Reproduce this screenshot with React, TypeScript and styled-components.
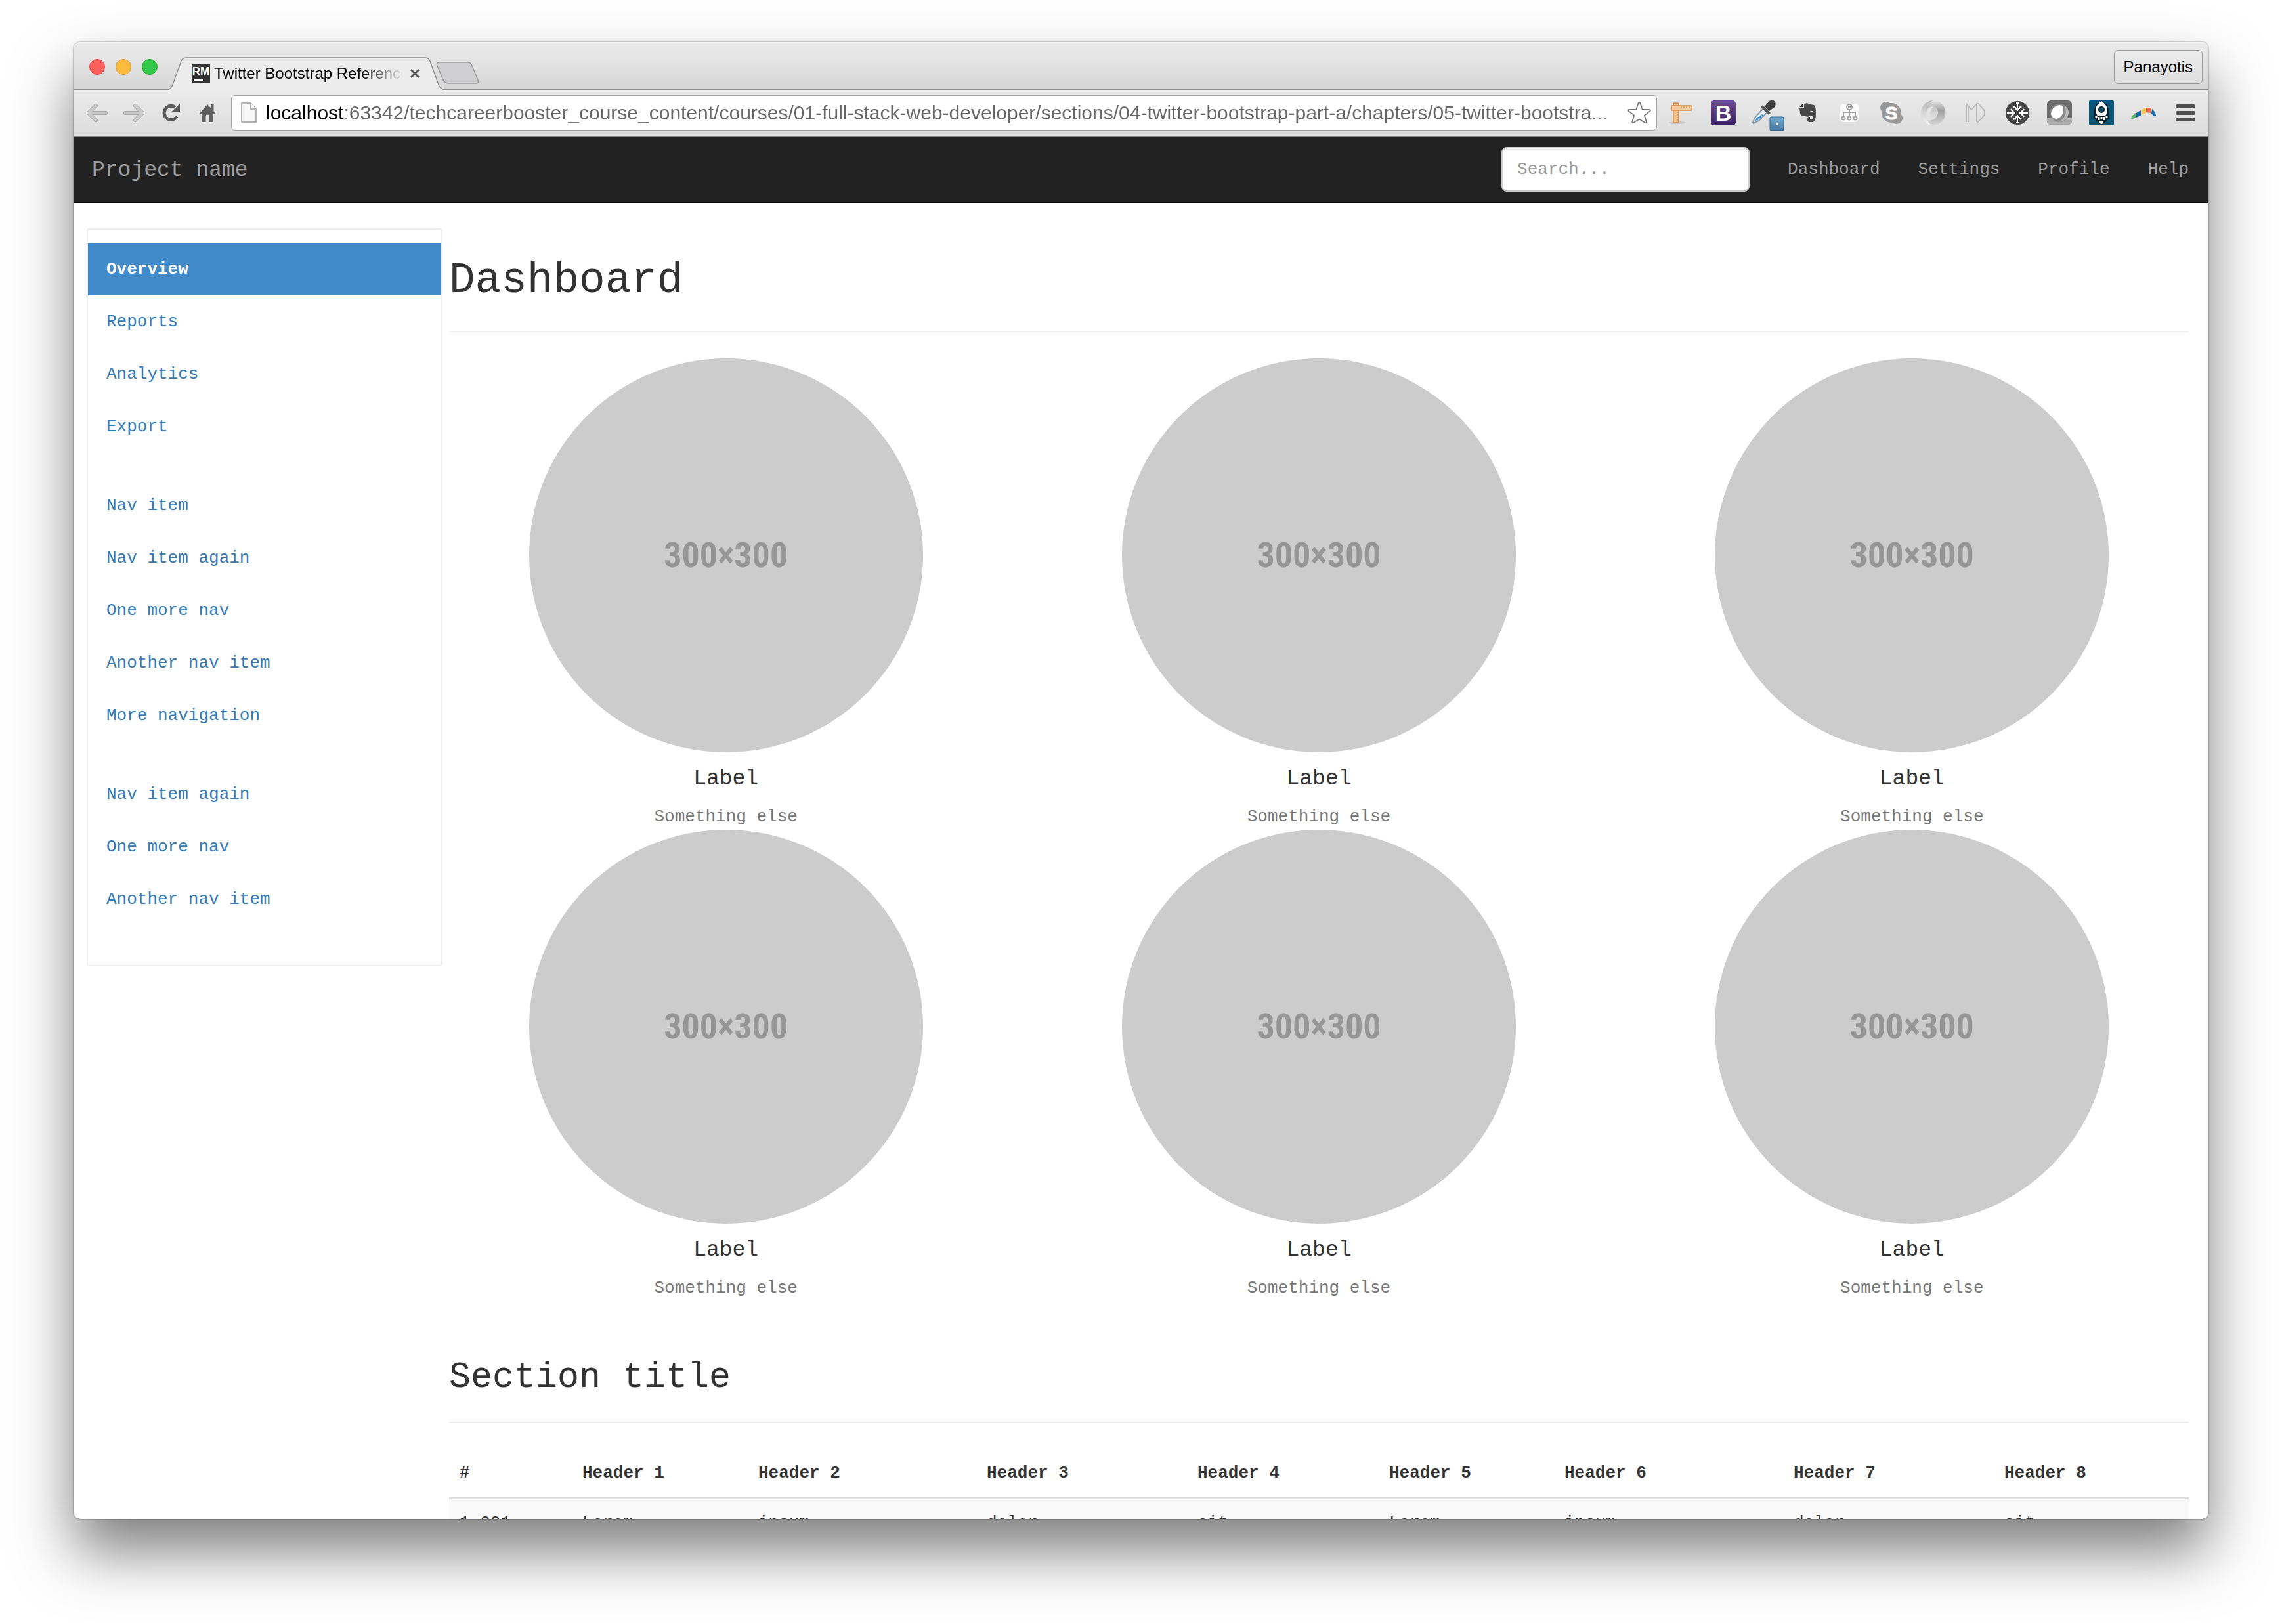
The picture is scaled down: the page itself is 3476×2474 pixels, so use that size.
import React from "react";
import styled, { createGlobalStyle } from "styled-components";

const mono = `"Liberation Mono", "DejaVu Sans Mono", monospace`;
const sans = `"Liberation Sans", Arial, sans-serif`;

const GlobalStyle = createGlobalStyle`
  *, *::before, *::after { box-sizing: border-box; }
  html, body { margin: 0; background: #fff; }
  a { text-decoration: none; }
`;

/* ---------- Browser window ---------- */

const Desktop = styled.div`
  display: flex;
  height: 100vh;
  padding: 64px 112px 160px;
  overflow: hidden;
`;

const BrowserWindow = styled.div`
  display: flex;
  flex: 1;
  flex-direction: column;
  min-width: 0;
  overflow: hidden;
  border-radius: 10px;
  background: #fff;
  box-shadow: 0 0 2px rgba(0, 0, 0, 0.65), 0 50px 90px rgba(0, 0, 0, 0.5);
`;

const TabStrip = styled.header`
  display: flex;
  flex: none;
  align-items: flex-end;
  height: 73px;
  padding: 0 9px 0 24px;
  border-bottom: 1px solid #8f8f8f;
  background: linear-gradient(#ececec, #d6d6d6);
  box-shadow: inset 0 2px 0 #f6f6f6;
`;

const Lights = styled.div`
  display: flex;
  gap: 16px;
  align-self: center;
  margin: 4px 16px 0 0;
`;

const Light = styled.button<{ $fill: string; $edge: string }>`
  width: 24px;
  height: 24px;
  padding: 0;
  border: 1px solid ${(p) => p.$edge};
  border-radius: 50%;
  background: ${(p) => p.$fill};
`;

const Tab = styled.div`
  position: relative;
  display: flex;
  align-items: center;
  width: 420px;
  height: 50px;
  margin-bottom: -1px;
  padding: 0 34px 0 36px;
`;

const TabShape = styled.svg`
  position: absolute;
  inset: 0;
  width: 100%;
  height: 100%;
`;

const Favicon = styled.svg`
  position: relative;
  flex: none;
  width: 28px;
  height: 28px;
`;

const TabTitle = styled.span`
  position: relative;
  flex: 1;
  margin: 0 8px 0 6px;
  overflow: hidden;
  color: #000;
  font: 24px/32px ${sans};
  white-space: nowrap;
  mask-image: linear-gradient(to right, #000 78%, transparent);
`;

const TabClose = styled.button`
  position: relative;
  display: flex;
  width: 20px;
  height: 20px;
  padding: 2px;
  border: 0;
  background: none;
`;

const NewTab = styled.button`
  display: flex;
  width: 66px;
  height: 34px;
  margin: 0 auto 8px -12px;
  padding: 0;
  border: 0;
  background: none;
`;

const Profile = styled.button`
  align-self: flex-start;
  height: 52px;
  margin-top: 12px;
  padding: 0 14px;
  border: 1px solid #999;
  border-radius: 6px;
  background: linear-gradient(#ececec, #dedede);
  color: #000;
  font: 24px/48px ${sans};
`;

const Toolbar = styled.div`
  display: flex;
  flex: none;
  align-items: center;
  height: 71px;
  padding: 0 3px 0 8px;
  border-bottom: 1px solid #8a8a8a;
  background: linear-gradient(#ebebeb, #dcdcdc);
`;

const NavButton = styled.button`
  display: flex;
  flex: none;
  align-items: center;
  justify-content: center;
  width: 56px;
  height: 54px;
  padding: 0;
  border: 0;
  background: none;
`;

const ExtensionButton = styled(NavButton)`
  width: 64px;
`;

const AddressBar = styled.form`
  display: flex;
  flex: 1;
  align-items: center;
  height: 54px;
  min-width: 0;
  margin: 0 5px 0 8px;
  padding: 0 8px 0 14px;
  border: 1px solid #a0a0a0;
  border-radius: 6px;
  background: #fff;
`;

const AddressInput = styled.input`
  flex: 1;
  min-width: 0;
  height: 40px;
  margin: 0 8px 0 14px;
  padding: 0;
  border: 0;
  outline: 0;
  background: linear-gradient(to right, #000 120px, #666 120px);
  background-clip: text;
  -webkit-text-fill-color: transparent;
  font: 30px/40px ${sans};
`;

const StarButton = styled.button`
  display: flex;
  padding: 0;
  border: 0;
  background: none;
`;

/* ---------- Web page ---------- */

const Navbar = styled.nav`
  display: flex;
  flex: none;
  align-items: center;
  height: 102px;
  padding: 0 30px 0 28px;
  gap: 58px;
  border-bottom: 2px solid #080808;
  background: #222;
  font: 26px/40px ${mono};
`;

const Brand = styled.a`
  margin-right: auto;
  padding-top: 4px;
  color: #9d9d9d;
  font-size: 33px;
`;

const NavLink = styled.a`
  color: #9d9d9d;
`;

const SearchInput = styled.input`
  width: 378px;
  height: 68px;
  padding: 0 22px;
  border: 2px solid #ccc;
  border-radius: 8px;
  background: #fff;
  box-shadow: inset 0 2px 2px rgba(0, 0, 0, 0.075);
  color: #555;
  font: 26px/40px ${mono};
  &::placeholder {
    color: #999;
    opacity: 1;
  }
`;

const Page = styled.div`
  display: flex;
  flex: 1;
  align-items: flex-start;
  gap: 10px;
  min-height: 0;
  padding: 0 30px 0 20px;
  color: #333;
  font: 26px/40px ${mono};
`;

const Sidebar = styled.aside`
  flex: 0 0 542px;
  margin-top: 38px;
  padding: 20px 0;
  border: 2px solid #eee;
  border-radius: 4px;
`;

const NavGroup = styled.ul`
  margin: 0 0 40px;
  padding: 0;
  list-style: none;
`;

const SideLink = styled.a<{ $active: boolean }>`
  display: block;
  padding: 20px 28px;
  background: ${(p) => (p.$active ? "#428bca" : "transparent")};
  color: ${(p) => (p.$active ? "#fff" : "#337ab7")};
  font-weight: ${(p) => (p.$active ? 700 : 400)};
`;

const Main = styled.main`
  flex: 1;
  min-width: 0;
  padding-top: 78px;
`;

const PageTitle = styled.h1`
  margin: 0 0 40px;
  padding-bottom: 36px;
  border-bottom: 2px solid #eee;
  font-size: 66px;
  font-weight: 400;
  line-height: 80px;
`;

const SectionTitle = styled.h2`
  margin: 84px 0 40px;
  padding-bottom: 34px;
  border-bottom: 2px solid #eee;
  font-size: 55px;
  font-weight: 400;
  line-height: 66px;
`;

const Placeholders = styled.section`
  display: grid;
  grid-template-columns: repeat(3, 1fr);
  margin: 0 -30px;
`;

const Placeholder = styled.div`
  display: flex;
  flex-direction: column;
  align-items: center;
`;

const Circle = styled.div`
  display: flex;
  align-items: center;
  justify-content: center;
  width: 600px;
  height: 600px;
  border-radius: 50%;
  background: #ccc;
  color: #969696;
  font: 700 54px/64px "Liberation Sans Narrow", "Roboto Condensed", "Open Sans Condensed", ${sans};
`;

const Label = styled.h4`
  margin: 22px 0 18px;
  font-size: 33px;
  font-weight: 400;
  line-height: 38px;
`;

const Caption = styled.span`
  color: #777;
`;

const Table = styled.table`
  width: 100%;
  table-layout: fixed;
  border-collapse: separate;
  border-spacing: 0;
`;

const HeadCell = styled.th`
  padding: 16px;
  border-bottom: 4px solid #ddd;
  font-weight: 700;
  text-align: left;
`;

const Cell = styled.td`
  padding: 16px;
  background: #f9f9f9;
`;

/* ---------- Icons ---------- */

const Arrow = ({ flip }: { flip?: boolean }) => (
  <svg width="32" height="28" viewBox="0 0 32 28" aria-hidden="true">
    <g transform={flip ? "matrix(-1 0 0 1 32 0)" : undefined}>
      <path d="M3 14H29M14 3L3 14L14 25" fill="none" stroke="#aaa" strokeWidth="6" strokeLinecap="round" strokeLinejoin="round" />
      <path d="M3 14H29M14 3L3 14L14 25" fill="none" stroke="#cbcbcb" strokeWidth="4" strokeLinecap="round" strokeLinejoin="round" />
    </g>
  </svg>
);

const Reload = () => (
  <svg width="30" height="30" viewBox="0 0 30 30" aria-hidden="true">
    <path d="M24.500 20.500A10.500 10.500 0 1 1 22 6.500" fill="none" stroke="#5a5a5a" strokeWidth="5" />
    <path d="M29 1V13H16.500Z" fill="#5a5a5a" />
  </svg>
);

const Home = () => (
  <svg width="28" height="30" viewBox="0 0 28 30" aria-hidden="true">
    <path d="M14 2L1 17H5V29H11.500V20A2.500 2.500 0 0 1 16.500 20V29H23V17H27L23.500 12.500V2H20V8.500Z" fill="#5e5e5e" />
  </svg>
);

const PageIcon = () => (
  <svg width="24" height="32" viewBox="0 0 24 32" aria-hidden="true">
    <path d="M1 1H15L23 10V30H1Z" fill="#f7f7f8" stroke="#999" strokeWidth="1.500" />
    <path d="M15 1V10H23" fill="#fff" stroke="#999" strokeWidth="1.500" />
  </svg>
);

const Star = () => (
  <svg width="36" height="36" viewBox="0 0 36 36" aria-hidden="true">
    <path d="M18 2Q19 2 19.600 3.600L22.800 12.700L33 13Q36 13.600 33.800 15.600L25.800 21.600L28.800 31.500Q29.200 34.200 26.700 33L18 27.400L9.300 33Q6.800 34.200 7.200 31.500L10.200 21.600L2.200 15.600Q0 13.600 3 13L13.200 12.700L16.400 3.600Q17 2 18 2Z" fill="#fff" stroke="#757575" strokeWidth="1.800" strokeLinejoin="round" />
  </svg>
);

const Icon = ({ children }: { children: React.ReactNode }) => (
  <svg width="40" height="54" viewBox="0 0 40 54" aria-hidden="true">
    {children}
  </svg>
);

const Ruler = () => (
  <Icon>
    <ellipse cx="14" cy="42" rx="13" ry="2" fill="#c8c8c8" />
    <rect x="8" y="12" width="8" height="30" rx="1" fill="#f2c48e" stroke="#d2874a" strokeWidth="1.500" />
    <rect x="5" y="16" width="31" height="7" rx="1" fill="#f5cda0" stroke="#d2874a" strokeWidth="1.500" />
    <path d="M13 26H16M13 30H16M13 34H16M13 38H16M20 17V20M24 17V20M28 17V20M32 17V20" stroke="#c07a40" strokeWidth="1.200" />
  </Icon>
);

const BootstrapIcon = () => (
  <Icon>
    <defs>
      <linearGradient id="purple" x2="0" y2="1">
        <stop stopColor="#6c4d92" />
        <stop offset="1" stopColor="#3b2360" />
      </linearGradient>
    </defs>
    <rect x="1" y="8" width="38" height="38" rx="5" fill="url(#purple)" />
    <text x="20" y="39" textAnchor="middle" fontFamily="Liberation Sans" fontWeight="700" fontSize="34" fill="#fff">B</text>
  </Icon>
);

const Dropper = () => (
  <svg width="58" height="56" viewBox="0 0 58 56" aria-hidden="true">
    <defs>
      <linearGradient id="badge" x2="0" y2="1">
        <stop stopColor="#7fb2d8" />
        <stop offset="1" stopColor="#3f739c" />
      </linearGradient>
    </defs>
    <path d="M10 43L13 35L26 21L32 27L19 40L11 44Z" fill="#e8f1fa" stroke="#8c959d" strokeWidth="2" />
    <path d="M14 40L15 36L24 30L26 31L18 39Z" fill="#3d93dc" />
    <path d="M25 16L37 28L34 31L22 19Z" fill="#555" />
    <path d="M28 18L35 10Q40 7 44 11Q46 16 42 20L35 25Z" fill="#3f3f3f" />
    <rect x="36" y="34" width="21" height="21" rx="2" fill="url(#badge)" stroke="#2f668f" />
    <rect x="45" y="43" width="3" height="4" fill="#fff" />
  </svg>
);

const Elephant = () => (
  <Icon>
    <path d="M8 19H15V13Q21 11 24 14L30 15Q33 16 33 28Q33 41 28 41H24Q19 41 19 36Q19 33 24 33V36L26 37L28 36Q29 31 25 31Q21 34 17 32Q10 32 9 28Z" fill="#474747" />
    <path d="M8 18L14 12V18Z" fill="#333" />
    <path d="M24 25Q25 22 29 25Z" fill="#ddd" />
  </Icon>
);

const Sitemap = () => (
  <Icon>
    <rect x="6" y="13" width="28" height="28" rx="5" fill="#fafafa" />
    <g fill="none" stroke="#a2a2a2" strokeWidth="2">
      <circle cx="20" cy="18" r="4" />
      <path d="M20 22V32M11 32V26H29V32M18 17L20 19L22 17" />
      <circle cx="11" cy="35" r="2.500" />
      <circle cx="20" cy="35" r="2.500" />
      <circle cx="29" cy="35" r="2.500" />
    </g>
  </Icon>
);

const SkypeIcon = () => (
  <Icon>
    <circle cx="20" cy="27" r="15" fill="#999" />
    <circle cx="12" cy="19" r="9" fill="#999" />
    <circle cx="28" cy="35" r="9" fill="#999" />
    <text x="20" y="37" textAnchor="middle" fontFamily="Liberation Sans" fontWeight="700" fontSize="28" fill="#fff" stroke="#fff">S</text>
  </Icon>
);

const Swirl = () => (
  <Icon>
    <defs>
      <linearGradient id="swirlA" x2="0" y2="1">
        <stop stopColor="#b4b4b4" />
        <stop offset="1" stopColor="#f4f4f4" />
      </linearGradient>
      <linearGradient id="swirlB" x2="0" y2="1">
        <stop stopColor="#e8e8e8" />
        <stop offset="0.400" stopColor="#a0a0a0" />
        <stop offset="1" stopColor="#d8d8d8" />
      </linearGradient>
    </defs>
    <path d="M20 8A19 19 0 0 0 20 46Q9 41 9 29Q10 17 21 17Q15 21 15 28Q15 34 20 37Q26 33 26 27Q26 20 20 17Q26 12 20 8Z" fill="url(#swirlA)" />
    <path d="M19 8A19 19 0 0 1 20 46Q14 45 11 38Q14 40 20 37Q27 33 27 26Q26 19 20 17Q12 15 9 22Q10 12 19 8Z" fill="url(#swirlB)" />
  </Icon>
);

const MarkdownIcon = () => (
  <Icon>
    <path d="M6 41V13L14 22L22 13V41M9 16V41M22 13H25L34 24V30L24 41H22" fill="none" stroke="#bababa" strokeWidth="2" />
  </Icon>
);

const Snowflake = () => (
  <Icon>
    <circle cx="20" cy="27" r="18" fill="#444" />
    {[0, 90, 180, 270].map((angle) => (
      <g key={angle} transform={`rotate(${angle} 20 27)`} stroke="#fff" fill="none">
        <path d="M20 24V12M18 12H22" strokeWidth="2" />
        <path d="M14 17L20 22L26 17" strokeWidth="2.500" />
      </g>
    ))}
  </Icon>
);

const Sphere = () => (
  <Icon>
    <rect x="1" y="8" width="38" height="37" rx="6" fill="#6a6a6a" />
    <path d="M1 35H39V39Q39 45 33 45H7Q1 45 1 39Z" fill="#ababab" />
    <circle cx="20" cy="27" r="14" fill="#8a8a8a" />
    <path d="M7 29Q8 17 20 15Q27 15 26 24Q24 34 16 36Q9 36 7 29Z" fill="#fff" />
    <path d="M19 41Q34 38 34 25Q33 19 28 16Q34 32 19 41Z" fill="#bbb" />
  </Icon>
);

const Rocket = () => (
  <Icon>
    <rect x="1" y="8" width="38" height="38" rx="2" fill="#0b5574" />
    <path d="M20 8L28 14L32 24L32 34L27 40L20 46L13 40L8 34L8 24L12 14Z" fill="#06202e" />
    <path d="M20 9Q29 15 29 23Q28 30 25 32H15Q12 30 11 23Q11 15 20 9Z" fill="#fff" />
    <circle cx="20" cy="22" r="4" fill="#0b5574" stroke="#06202e" strokeWidth="2" />
    <path d="M12 31V34M16 33V38M20 33V36M24 33V38M28 31V34M20 39V44M17 41H23" stroke="#fff" strokeWidth="3" />
  </Icon>
);

const Boomerang = () => (
  <Icon>
    <path d="M1 36Q2 31 8 27V34L2 37Z" fill="#57ac70" />
    <path d="M9 27L16 23V31L9 34Z" fill="#1a6aa8" />
    <path d="M17 22L24 19V27L17 30Z" fill="#f7c552" />
    <path d="M24 19Q29 18 32 20L31 27L24 26Z" fill="#e6694b" />
    <path d="M33 21Q38 25 39 31Q38 33 36 32L32 28Z" fill="#1a6aa8" />
  </Icon>
);

const Menu = () => (
  <Icon>
    <path d="M8 17H32M8 27H32M8 37H32" stroke="#505050" strokeWidth="6" strokeLinecap="round" />
  </Icon>
);

/* ---------- Content ---------- */

const extensions: [string, React.FC][] = [
  ["Page ruler", Ruler],
  ["Bootstrap", BootstrapIcon],
  ["Color picker", Dropper],
  ["Web clipper", Elephant],
  ["Site map", Sitemap],
  ["Skype", SkypeIcon],
  ["JSON viewer", Swirl],
  ["Markdown", MarkdownIcon],
  ["Snowflake", Snowflake],
  ["Sphere", Sphere],
  ["Rocket", Rocket],
  ["Boomerang", Boomerang],
  ["Menu", Menu],
];

const navGroups = [
  ["Overview", "Reports", "Analytics", "Export"],
  ["Nav item", "Nav item again", "One more nav", "Another nav item", "More navigation"],
  ["Nav item again", "One more nav", "Another nav item"],
];

const columns = [
  { head: "#", width: 187, value: "1,001" },
  { head: "Header 1", width: 268, value: "Lorem" },
  { head: "Header 2", width: 348, value: "ipsum" },
  { head: "Header 3", width: 321, value: "dolor" },
  { head: "Header 4", width: 292, value: "sit" },
  { head: "Header 5", width: 267, value: "Lorem" },
  { head: "Header 6", width: 349, value: "ipsum" },
  { head: "Header 7", width: 321, value: "dolor" },
  { head: "Header 8", width: 297, value: "sit" },
];
const totalWidth = columns.reduce((sum, c) => sum + c.width, 0);

export default function App() {
  return (
    <>
      <GlobalStyle />
      <Desktop>
        <BrowserWindow>
          <TabStrip>
            <Lights>
              <Light $fill="#fc605b" $edge="#df4744" aria-label="Close window" />
              <Light $fill="#fdbc40" $edge="#de9f34" aria-label="Minimize window" />
              <Light $fill="#34c84a" $edge="#27aa35" aria-label="Zoom window" />
            </Lights>
            <Tab>
              <TabShape viewBox="0 0 420 50" aria-hidden="true">
                <path d="M0 50Q5 48 7 42L20 6Q22 1 28 1H391Q397 1 399 6L412 42Q414 48 420 50Z" fill="#ececec" />
                <path d="M0 49.500Q5 48 7 42L20 6Q22 1 28 1H391Q397 1 399 6L412 42Q414 48 420 49.500" fill="none" stroke="#8f8f8f" strokeWidth="1.500" />
              </TabShape>
              <Favicon viewBox="0 0 28 28" aria-hidden="true">
                <rect width="28" height="28" fill="#333" />
                <text x="14" y="16" textAnchor="middle" fontFamily="Liberation Sans" fontWeight="700" fontSize="17" fill="#fff">RM</text>
                <rect x="3" y="23" width="14" height="2" fill="#fff" />
              </Favicon>
              <TabTitle>Twitter Bootstrap Reference</TabTitle>
              <TabClose aria-label="Close tab">
                <svg width="16" height="16" viewBox="0 0 16 16" aria-hidden="true">
                  <path d="M2 2L14 14M14 2L2 14" stroke="#5a5a5a" strokeWidth="3" />
                </svg>
              </TabClose>
            </Tab>
            <NewTab aria-label="New tab">
              <svg width="66" height="34" viewBox="0 0 66 34" aria-hidden="true">
                <path d="M5 1H48Q53 1 55 6L64 28Q66 33 61 33H19Q14 33 11 28L2 6Q0 1 5 1Z" fill="#cfcfd1" stroke="#999" strokeWidth="1.500" />
              </svg>
            </NewTab>
            <Profile>Panayotis</Profile>
          </TabStrip>

          <Toolbar>
            <NavButton aria-label="Back"><Arrow /></NavButton>
            <NavButton aria-label="Forward"><Arrow flip /></NavButton>
            <NavButton aria-label="Reload"><Reload /></NavButton>
            <NavButton aria-label="Home"><Home /></NavButton>
            <AddressBar onSubmit={(e) => e.preventDefault()}>
              <PageIcon />
              <AddressInput
                aria-label="Address"
                defaultValue="localhost:63342/techcareerbooster_course_content/courses/01-full-stack-web-developer/sections/04-twitter-bootstrap-part-a/chapters/05-twitter-bootstra..."
              />
              <StarButton type="button" aria-label="Bookmark this page"><Star /></StarButton>
            </AddressBar>
            {extensions.map(([name, Glyph]) => (
              <ExtensionButton key={name} aria-label={name}><Glyph /></ExtensionButton>
            ))}
          </Toolbar>

          <Navbar>
            <Brand href="#">Project name</Brand>
            <SearchInput type="text" aria-label="Search" placeholder="Search..." />
            <NavLink href="#">Dashboard</NavLink>
            <NavLink href="#">Settings</NavLink>
            <NavLink href="#">Profile</NavLink>
            <NavLink href="#">Help</NavLink>
          </Navbar>

          <Page>
            <Sidebar>
              {navGroups.map((group, g) => (
                <NavGroup key={g}>
                  {group.map((item) => (
                    <li key={item}>
                      <SideLink href="#" $active={item === "Overview"}>{item}</SideLink>
                    </li>
                  ))}
                </NavGroup>
              ))}
            </Sidebar>
            <Main>
              <PageTitle>Dashboard</PageTitle>
              <Placeholders>
                {Array.from({ length: 6 }, (_, i) => (
                  <Placeholder key={i}>
                    <Circle>300×300</Circle>
                    <Label>Label</Label>
                    <Caption>Something else</Caption>
                  </Placeholder>
                ))}
              </Placeholders>
              <SectionTitle>Section title</SectionTitle>
              <Table>
                <colgroup>
                  {columns.map((c) => (
                    <col key={c.head} style={{ width: `${(c.width / totalWidth) * 100}%` }} />
                  ))}
                </colgroup>
                <thead>
                  <tr>{columns.map((c) => <HeadCell key={c.head} scope="col">{c.head}</HeadCell>)}</tr>
                </thead>
                <tbody>
                  <tr>{columns.map((c) => <Cell key={c.head}>{c.value}</Cell>)}</tr>
                </tbody>
              </Table>
            </Main>
          </Page>
        </BrowserWindow>
      </Desktop>
    </>
  );
}
